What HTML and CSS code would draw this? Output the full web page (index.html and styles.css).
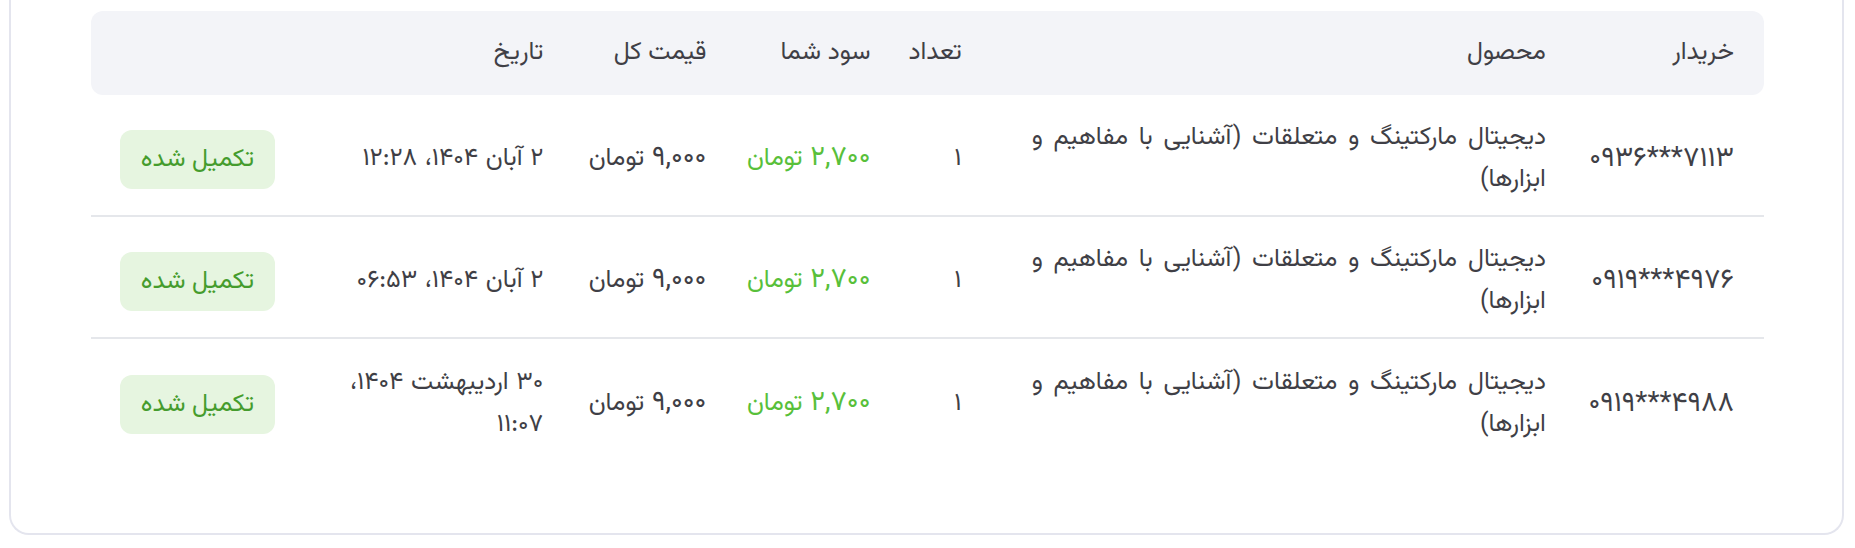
FILE: index.html
```html
<!DOCTYPE html>
<html lang="fa" dir="rtl">
<head>
<meta charset="utf-8">
<title>فروش‌ها</title>
<link rel="stylesheet" href="styles.css">
</head>
<body>
<div class="page">
  <section class="card">
    <table class="sales">
      <colgroup>
        <col class="c-buyer">
        <col class="c-product">
        <col class="c-qty">
        <col class="c-profit">
        <col class="c-price">
        <col class="c-date">
        <col class="c-status">
      </colgroup>
      <thead>
        <tr>
          <th>خریدار</th>
          <th>محصول</th>
          <th>تعداد</th>
          <th>سود شما</th>
          <th>قیمت کل</th>
          <th>تاریخ</th>
          <th></th>
        </tr>
      </thead>
      <tbody>
        <tr>
          <td><span class="phone">۰۹۳۶***۷۱۱۳</span></td>
          <td class="product">دیجیتال مارکتینگ و متعلقات (آشنایی با مفاهیم و ابزارها)</td>
          <td>۱</td>
          <td class="money profit"><span class="num">۲,۷۰۰</span> تومان</td>
          <td class="money"><span class="num">۹,۰۰۰</span> تومان</td>
          <td>۲ آبان ۱۴۰۴، ۱۲:۲۸</td>
          <td><span class="badge">تکمیل شده</span></td>
        </tr>
        <tr>
          <td><span class="phone">۰۹۱۹***۴۹۷۶</span></td>
          <td class="product">دیجیتال مارکتینگ و متعلقات (آشنایی با مفاهیم و ابزارها)</td>
          <td>۱</td>
          <td class="money profit"><span class="num">۲,۷۰۰</span> تومان</td>
          <td class="money"><span class="num">۹,۰۰۰</span> تومان</td>
          <td>۲ آبان ۱۴۰۴، ۰۶:۵۳</td>
          <td><span class="badge">تکمیل شده</span></td>
        </tr>
        <tr>
          <td><span class="phone">۰۹۱۹***۴۹۸۸</span></td>
          <td class="product">دیجیتال مارکتینگ و متعلقات (آشنایی با مفاهیم و ابزارها)</td>
          <td>۱</td>
          <td class="money profit"><span class="num">۲,۷۰۰</span> تومان</td>
          <td class="money"><span class="num">۹,۰۰۰</span> تومان</td>
          <td>۳۰ اردیبهشت ۱۴۰۴، ۱۱:۰۷</td>
          <td><span class="badge">تکمیل شده</span></td>
        </tr>
      </tbody>
    </table>
  </section>
</div>
</body>
</html>
```

FILE: styles.css
```css
* { box-sizing: border-box; }

html, body {
  margin: 0;
  padding: 0;
  background: #ffffff;
}

body {
  font-family: "Vazirmatn", "Noto Sans Arabic", "DejaVu Sans", sans-serif;
  color: #3f3f46;
  font-size: 25px;
}

.page {
  padding: 0 11px 12px 9px;
}

.card {
  border: 2px solid #e4e5ee;
  border-top: none;
  border-radius: 0 0 20px 20px;
  padding: 11px 78px 72px 80px;
  background: #ffffff;
}

.sales {
  width: 100%;
  table-layout: fixed;
  border-collapse: separate;
  border-spacing: 0;
}

.c-buyer { width: 188px; }
.c-product { width: 584px; }
.c-qty { width: 91px; }
.c-profit { width: 164px; }
.c-price { width: 163px; }
.c-date { width: 268px; }
.c-status { width: 214px; }

.sales th {
  background: #f3f4f8;
  font-weight: 400;
  text-align: right;
  height: 84px;
  padding: 0 30px;
  line-height: 36px;
  color: #3f3f46;
}

.sales th:first-child { border-radius: 0 12px 12px 0; }
.sales th:last-child { border-radius: 12px 0 0 12px; }

.sales td {
  text-align: right;
  vertical-align: middle;
  padding: 22px 30px 14px;
  line-height: 42px;
  height: 122px;
  border-bottom: 2px solid #e5e7eb;
  word-spacing: 1px;
}

.sales tbody tr:last-child td { border-bottom: none; }

.sales td.product { word-spacing: 4px; }

.phone {
  direction: ltr;
  unicode-bidi: isolate;
  display: inline-block;
  font-size: 28px;
  line-height: 42px;
}

.money { white-space: nowrap; word-spacing: 6px; }

.num { font-size: 28px; line-height: 1; }

.profit { color: #58c03a; }

.badge {
  display: inline-block;
  background: #e6f5e0;
  color: #459c2d;
  border-radius: 12px;
  padding: 8px 21px;
  line-height: 43px;
  white-space: nowrap;
  word-spacing: 0;
}
```
